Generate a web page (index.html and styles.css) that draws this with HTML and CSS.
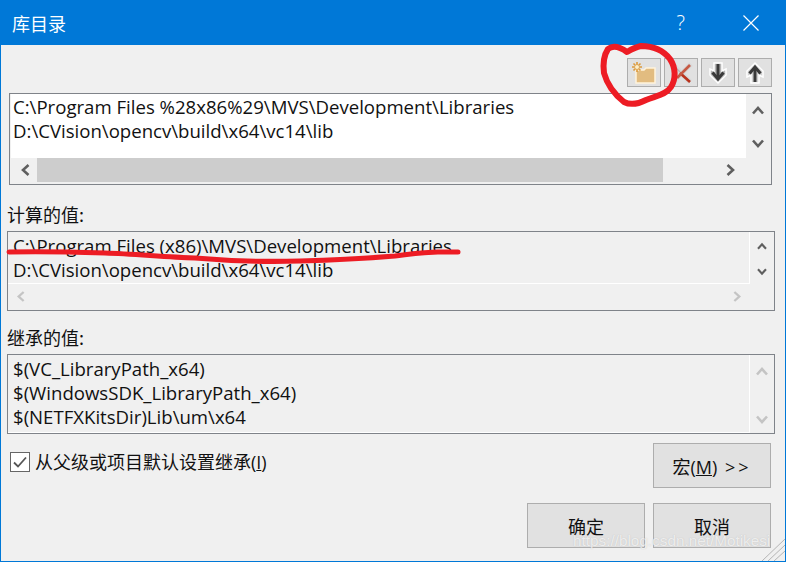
FILE: index.html
```html
<!DOCTYPE html>
<html lang="zh-CN">
<head>
<meta charset="UTF-8" />
<title>库目录</title>
<link rel="stylesheet" href="styles.css">
</head>
<body>
<svg class="defs" width="0" height="0">
  <symbol id="up" viewBox="0 0 12 10"><path d="M1 8.500 6 3l5 5.500" fill="none" stroke="currentColor" stroke-width="2.600"/></symbol>
  <symbol id="down" viewBox="0 0 12 10"><path d="M1 1.500 6 7l5-5.500" fill="none" stroke="currentColor" stroke-width="2.600"/></symbol>
  <symbol id="left" viewBox="0 0 10 12"><path d="M8.500 1 3 6l5.500 5" fill="none" stroke="currentColor" stroke-width="2.600"/></symbol>
  <symbol id="right" viewBox="0 0 10 12"><path d="M1.500 1 7 6l-5.500 5" fill="none" stroke="currentColor" stroke-width="2.600"/></symbol>
</svg>

<div class="window">
  <div class="titlebar">
    <span class="title">库目录</span>
    <span class="help">?</span>
    <svg class="close" width="16" height="16" viewBox="0 0 16 16"><path d="M.5.5l15 15M15.500.5l-15 15" stroke="#fff" stroke-width="1.200" fill="none"/></svg>
  </div>

  <div class="content">
    <!-- toolbar -->
    <div class="toolbar">
      <button class="tool">
        <svg width="26" height="24" viewBox="0 0 26 24">
          <path d="M5 9h8l2-2h9v15H5z" fill="#e2bc80" stroke="#fff3dc" stroke-width="1.500"/>
          <path d="M6 1v10M1 6h10M2.500 2.500l7 7M9.500 2.500l-7 7" stroke="#dc9a3c" stroke-width="1.600"/>
          <circle cx="6" cy="6" r="2" fill="#fbeecb"/>
        </svg>
      </button>
      <button class="tool">
        <svg width="26" height="24" viewBox="0 0 26 24">
          <path d="M4 3l18 18M23 3 5 21" stroke="#d8d8d8" stroke-width="5"/>
          <path d="M6 5l16 16" stroke="#b5b5b5" stroke-width="1.500"/>
          <path d="M12 12l10 9" stroke="#b9321c" stroke-width="2.600"/>
          <path d="M22 4 9 17" stroke="#c65a44" stroke-width="2.600"/>
        </svg>
      </button>
      <button class="tool">
        <svg width="22" height="24" viewBox="0 0 22 24">
          <path d="M7 2h8v8l4-2v6l-8 8-8-8V8l4 2z" fill="#b4b4b4" stroke="#fff" stroke-width="1.500"/>
          <path d="M11 3v15" stroke="#3a3a3a" stroke-width="3"/>
          <path d="M5.500 11.500 11 18l5.500-6.500" fill="none" stroke="#3a3a3a" stroke-width="3"/>
        </svg>
      </button>
      <button class="tool">
        <svg width="22" height="24" viewBox="0 0 22 24">
          <path d="M7 22h8v-8l4 2v-6l-8-8-8 8v6l4-2z" fill="#d0d0d0" stroke="#fff" stroke-width="1.500"/>
          <path d="M11 21V6" stroke="#3a3a3a" stroke-width="3"/>
          <path d="M5.500 12.500 11 6l5.500 6.500" fill="none" stroke="#3a3a3a" stroke-width="3"/>
        </svg>
      </button>
    </div>

    <!-- editable list -->
    <div class="listbox editable">
      <div class="lines">
        <div>C:\Program Files %28x86%29\MVS\Development\Libraries</div>
        <div>D:\CVision\opencv\build\x64\vc14\lib</div>
      </div>
      <div class="vscroll">
        <svg class="arrow-v"><use href="#up"/></svg>
        <svg class="arrow-v"><use href="#down"/></svg>
      </div>
      <div class="hscroll">
        <svg class="arrow-h"><use href="#left"/></svg>
        <div class="thumb"></div>
        <svg class="arrow-h"><use href="#right"/></svg>
      </div>
    </div>

    <label class="caption first">计算的值:</label>
    <div class="listbox computed">
      <div class="lines">
        <div>C:\Program Files (x86)\MVS\Development\Libraries</div>
        <div>D:\CVision\opencv\build\x64\vc14\lib</div>
      </div>
      <div class="vscroll small">
        <svg class="arrow-v"><use href="#up"/></svg>
        <svg class="arrow-v"><use href="#down"/></svg>
      </div>
      <div class="hscroll off">
        <svg class="arrow-h"><use href="#left"/></svg>
        <svg class="arrow-h"><use href="#right"/></svg>
      </div>
    </div>

    <label class="caption">继承的值:</label>
    <div class="listbox inherited">
      <div class="lines">
        <div>$(VC_LibraryPath_x64)</div>
        <div>$(WindowsSDK_LibraryPath_x64)</div>
        <div>$(NETFXKitsDir)Lib\um\x64</div>
      </div>
      <div class="vscroll off">
        <svg class="arrow-v"><use href="#up"/></svg>
        <svg class="arrow-v"><use href="#down"/></svg>
      </div>
    </div>

    <div class="macro-row">
      <div class="inherit">
        <span class="checkbox">
          <svg width="18" height="18" viewBox="0 0 18 18"><path d="M3 9.500l4 4 8-9" fill="none" stroke="#555" stroke-width="1.800"/></svg>
        </span>
        <span>从父级或项目默认设置继承(<u>I</u>)</span>
      </div>
      <button class="btn">宏(<u>M</u>) <span class="more">&gt;&gt;</span></button>
    </div>

    <div class="actions">
      <button class="btn">确定</button>
      <button class="btn">取消</button>
    </div>
  </div>

  <!-- hand-drawn marks and watermark on top of the dialog -->
  <svg class="marks" width="786" height="562" viewBox="0 0 786 562">
    <path d="M627 52C620 47 613 45 608 49 604 55 603 65 604 73 607 84 614 94 624 102 630 105 638 104 646 100 655 96 666 95 671 87 676 79 676 68 670 59 663 50 652 46 641 46 636 47 632 49 627 52Z" fill="none" stroke="#ed1c24" stroke-width="6" stroke-linejoin="round"/>
    <path d="M9 252C40 251 75 252 105 253 135 254 165 257 195 258 230 261 265 262 300 261 335 260 370 258 395 256 412 254 425 252 438 252L458 252" fill="none" stroke="#ed1c24" stroke-width="5" stroke-linecap="round"/>
    <path d="M785 539l-23 22M785 545l-17 16M785 551l-11 10" stroke="#b5b5b5" stroke-width="1"/>
  </svg>
  <span class="watermark">https://blog.csdn.net/Motikesi</span>
</div>
</body>
</html>
```

FILE: styles.css
```css
* { box-sizing: border-box; }
html, body { margin: 0; padding: 0; }
body { width: 786px; height: 562px; overflow: hidden; font-family: "Open Sans", "Noto Sans CJK SC", sans-serif; font-size: 18.6px; color: #111; }
.defs { display: block; height: 0; }

.window { position: relative; width: 786px; height: 562px; background: #f0f0f0; border: 1px solid #0078d7; border-top: none; display: flex; flex-direction: column; overflow: hidden; }

.titlebar { height: 45px; background: #0078d7; color: #fff; display: flex; align-items: center; padding: 0 26px 0 11px; flex: none; }
.title { flex: 1; font-size: 18px; font-family: "Noto Sans CJK SC", sans-serif; }
.help { font-size: 20px; margin-right: 58px; font-weight: 300; }

.content { flex: 1; display: flex; flex-direction: column; padding: 13px 13px 0 6px; }

.toolbar { display: flex; justify-content: flex-end; gap: 3px; height: 29px; }
.tool { width: 34px; height: 29px; padding: 0; display: flex; align-items: center; justify-content: center; background: #e1e1e1; border: 1px solid #adadad; }

.listbox { border: 1px solid #7f8389; display: grid; grid-template-columns: 1fr 24px; flex: none; line-height: 24px; }
.lines { padding: 1px 0 0 5px; white-space: nowrap; overflow: hidden; }
.vscroll { display: flex; flex-direction: column; align-items: center; justify-content: space-between; color: #5f5f5f; }
.vscroll.off, .hscroll.off { color: #c4c4c4; }
.arrow-v { width: 12px; height: 10px; display: block; }
.arrow-h { width: 10px; height: 12px; display: block; flex: none; }
.hscroll { display: flex; align-items: center; color: #5f5f5f; background: #f0f0f0; height: 24px; }

.editable { margin: 6px 0 0 2px; height: 92px; padding: 0 1px 2px 1px; grid-template-rows: 64px 24px; background: #f0f0f0; }
.editable .lines { background: #fff; padding-left: 2px; }
.editable .vscroll { padding: 11px 0 9px; }
.editable .hscroll { padding: 0 10px 0 9px; grid-column: 1; }
.editable .thumb { flex: 1; align-self: stretch; background: #cdcdcd; margin: 0 63px 0 7px; }

.computed, .inherited { margin-right: -3px; height: 80px; }
.computed { grid-template-rows: 52px 26px; }
.computed .lines, .inherited .lines { border: 1px solid #fff; border-width: 0 1px 1px 0; padding-left: 5px; padding-top: 2px; }
.computed .vscroll { padding: 10px 0 8px; }
.computed .arrow-v { width: 10px; height: 8px; }
.computed .hscroll { padding: 0 8px 0 8px; justify-content: space-between; }
.computed .arrow-h { width: 9px; height: 11px; }

.inherited .vscroll { padding: 11px 0 8px; }

.caption { height: 43px; display: flex; align-items: flex-end; padding-bottom: 5px; font-family: "Noto Sans CJK SC", sans-serif; font-size: 18px; line-height: 24px; }
.caption.first { height: 46px; }

.macro-row { display: flex; justify-content: space-between; align-items: flex-start; margin: 9px 1px 0 0; padding-left: 3px; }
.inherit { display: flex; align-items: center; gap: 5px; margin-top: 7px; font-size: 18px; line-height: 24px; }
.checkbox { width: 20px; height: 20px; background: #fff; border: 1px solid #666; display: flex; align-items: center; justify-content: center; flex: none; }

.btn { width: 118px; height: 45px; padding: 0; background: #e1e1e1; border: 1px solid #adadad; font: inherit; font-size: 18px; color: #111; }
.more { letter-spacing: 3px; margin-left: 3px; }
.actions { display: flex; justify-content: flex-end; gap: 8px; margin: 15px 1px 0 0; }

.marks { position: absolute; left: -1px; top: 0; pointer-events: none; }
.watermark { position: absolute; left: 572px; top: 531px; font-family: "Liberation Sans", sans-serif; font-size: 15.3px; line-height: 20px; color: rgba(255, 255, 255, 0.72); text-shadow: 0 0 1px rgba(150, 150, 150, 0.5); white-space: nowrap; }
```
